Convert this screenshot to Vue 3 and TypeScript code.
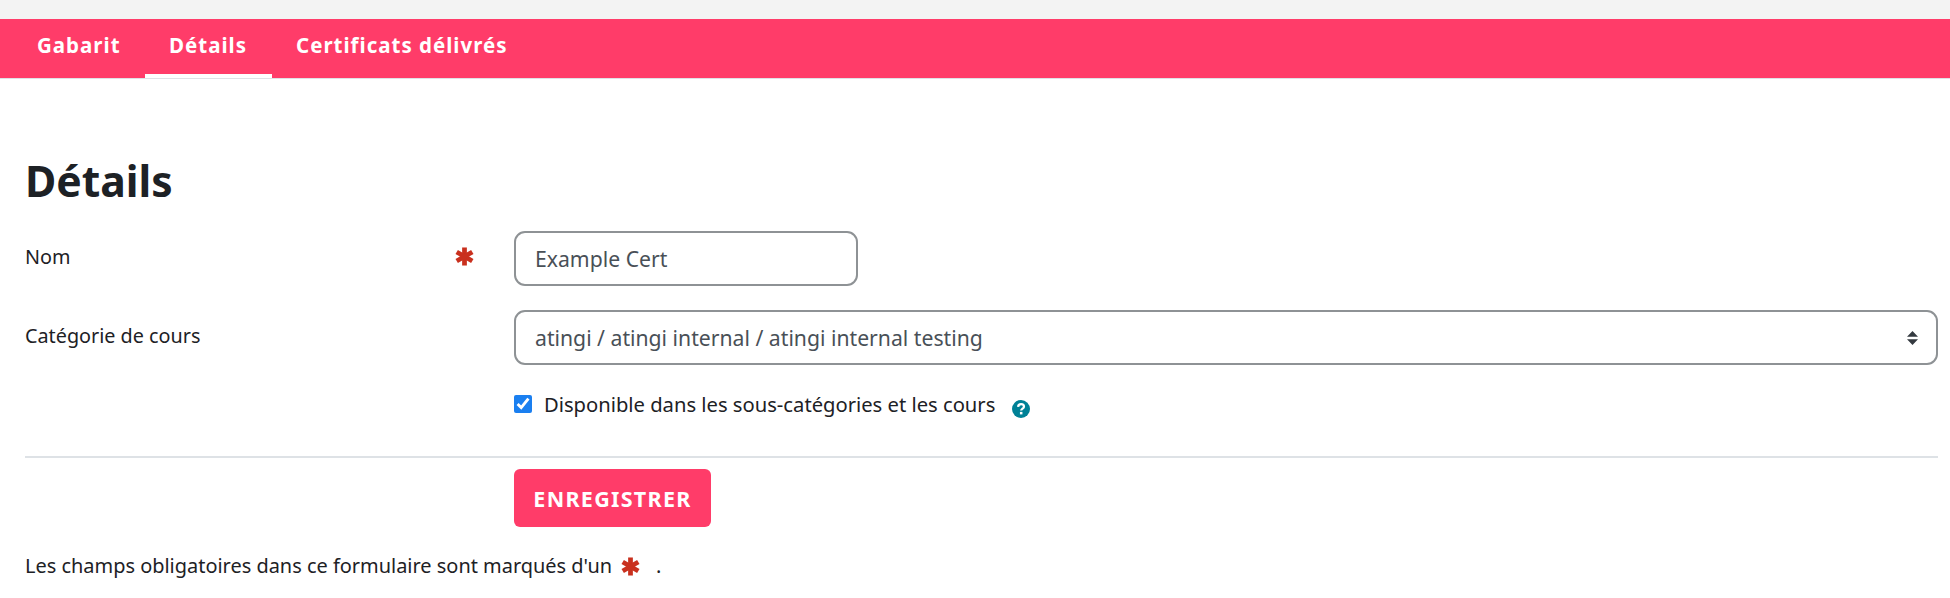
<script setup lang="ts">
import { ref } from "vue";

const tabs = [
  { label: "Gabarit", active: false },
  { label: "Détails", active: true },
  { label: "Certificats délivrés", active: false },
];

const name = ref("Example Cert");
const category = ref("atingi / atingi internal / atingi internal testing");
const inherited = ref(true);
</script>

<template>
  <div class="page">
    <div class="top-strip"></div>
    <nav class="tabs">
      <a v-for="tab in tabs" :key="tab.label" class="tab" :class="{ active: tab.active }">{{ tab.label }}</a>
    </nav>

    <main class="content">
      <h2 class="title">Détails</h2>

      <form class="form" @submit.prevent>
        <div class="row row-name">
          <label class="label">
            <span>Nom</span>
            <svg class="req" viewBox="0 0 20 20" aria-hidden="true">
              <g stroke="#c9301e" stroke-width="5">
                <line x1="10" y1="0.500" x2="10" y2="19.500" />
                <line x1="1.800" y1="5.250" x2="18.200" y2="14.750" />
                <line x1="1.800" y1="14.750" x2="18.200" y2="5.250" />
              </g>
            </svg>
          </label>
          <input v-model="name" class="control name-input" type="text" />
        </div>

        <div class="row row-category">
          <label class="label"><span>Catégorie de cours</span></label>
          <div class="select-wrap">
            <select v-model="category" class="control select">
              <option>{{ category }}</option>
            </select>
            <svg class="arrows" viewBox="0 0 12 16" aria-hidden="true">
              <path d="M6 1 11.500 6.800H.5Z M6 15 .5 9.200H11.500Z" fill="#343a40" />
            </svg>
          </div>
        </div>

        <div class="row row-check">
          <div></div>
          <label class="check">
            <input v-model="inherited" type="checkbox" />
            <span>Disponible dans les sous-catégories et les cours</span>
            <svg class="help" viewBox="0 0 20 20" aria-hidden="true">
              <circle cx="10" cy="10" r="10" fill="#008196" />
              <path d="M6.800 7.600C6.900 5.700 8.300 4.700 10.100 4.700 11.900 4.700 13.300 5.800 13.300 7.400 13.300 9.600 10.200 9.700 10.200 11.800" fill="none" stroke="#fff" stroke-width="2.500" />
              <rect x="8.800" y="13.200" width="2.800" height="2.800" fill="#fff" />
            </svg>
          </label>
        </div>

        <hr class="divider" />

        <div class="row row-submit">
          <div></div>
          <div><button class="save" type="submit">ENREGISTRER</button></div>
        </div>

        <p class="note">
          <span>Les champs obligatoires dans ce formulaire sont marqués d'un</span>
          <svg class="req req-note" viewBox="0 0 20 20" aria-hidden="true">
            <g stroke="#c9301e" stroke-width="5">
              <line x1="10" y1="0.500" x2="10" y2="19.500" />
              <line x1="1.800" y1="5.250" x2="18.200" y2="14.750" />
              <line x1="1.800" y1="14.750" x2="18.200" y2="5.250" />
            </g>
          </svg>
          <span class="dot">.</span>
        </p>
      </form>
    </main>
  </div>
</template>

<style>
html,
body {
  margin: 0;
  background: #fff;
}
</style>

<style scoped>
.page {
  font-family: "Noto Sans", "Open Sans", sans-serif;
  font-size: 19.8px;
  color: #1d2125;
}

.top-strip {
  height: 19px;
  background: #f3f3f3;
}

.tabs {
  display: flex;
  height: 59px;
  padding-left: 12px;
  background: #ff3c69;
  border-bottom: 1px solid #dee2e6;
}

.tab {
  display: flex;
  align-items: center;
  padding: 0 24.500px 3px;
  border-bottom: 4px solid transparent;
  color: #fff;
  font-size: 20.5px;
  font-weight: 700;
  letter-spacing: 1px;
}

.tab:first-child {
  padding-left: 25px;
  padding-right: 24px;
}

.tab.active {
  border-bottom-color: #fff;
}

.content {
  padding: 0 12px 0 25px;
}

.title {
  margin: 0;
  padding-top: 75px;
  font-size: 42.700px;
  line-height: 54px;
  font-weight: 700;
}

.row {
  display: grid;
  grid-template-columns: 489px 1fr;
}

.row-name {
  margin-top: 23px;
}

.row-category {
  margin-top: 24px;
}

.row-check {
  margin-top: 25px;
}

.label {
  display: flex;
  justify-content: space-between;
  align-items: flex-start;
  padding: 13px 40px 0 0;
  line-height: 26px;
}

.req {
  width: 19px;
  height: 19px;
  margin-top: 3px;
}

.control {
  box-sizing: border-box;
  height: 55px;
  padding: 0 19px;
  border: 2px solid #8e9295;
  border-radius: 11px;
  background: #fff;
  color: #495057;
  font: inherit;
  font-size: 21.2px;
  outline: none;
}

.name-input {
  width: 344px;
}

.select-wrap {
  position: relative;
}

.select {
  width: 100%;
  appearance: none;
}

.arrows {
  position: absolute;
  top: 20px;
  right: 19px;
  width: 13px;
  height: 16px;
}

.check {
  display: flex;
  align-items: center;
  height: 28px;
  font-size: 20.2px;
}

.check input {
  width: 18px;
  height: 18px;
  margin: 0 12px 0 0;
  accent-color: #1a7ff0;
}

.help {
  width: 18px;
  height: 18px;
  margin: 9px 0 0 17px;
}

.divider {
  margin: 38px 0 11px;
  border: 0;
  border-top: 2px solid #dee2e6;
}

.save {
  box-sizing: border-box;
  width: 197px;
  height: 58px;
  border: 0;
  border-radius: 6px;
  background: #ff3c69;
  color: #fff;
  font: inherit;
  font-size: 21.5px;
  font-weight: 700;
  letter-spacing: 1.300px;
}

.note {
  display: flex;
  align-items: center;
  margin: 25px 0 0;
  line-height: 28px;
  font-size: 19.950px;
}

.req-note {
  margin: 0 0 0 9px;
}

.dot {
  margin-left: 16px;
}
</style>
